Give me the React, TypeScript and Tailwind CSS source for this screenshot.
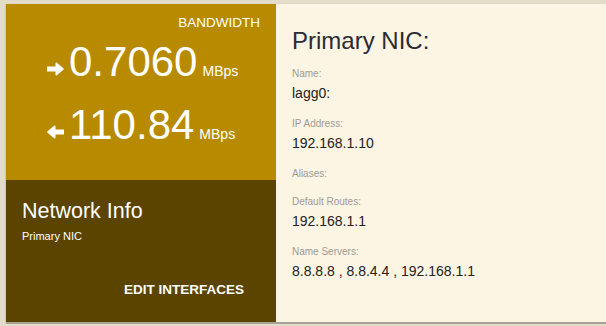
const fields = [
  { label: 'Name:', value: 'lagg0:' },
  { label: 'IP Address:', value: '192.168.1.10' },
  { label: 'Aliases:', value: '' },
  { label: 'Default Routes:', value: '192.168.1.1' },
  { label: 'Name Servers:', value: '8.8.8.8 , 8.8.4.4 , 192.168.1.1' },
];

function Arrow({ left }: { left?: boolean }) {
  return (
    <svg width="17" height="14" viewBox="0 0 17 14" className={left ? 'block -scale-x-100' : 'block'}>
      <path d="M0 4.5h8.5V1.2c0-.8.6-1 1.1-.6l6.8 5.6c.5.4.5 1.2 0 1.6l-6.8 5.6c-.5.4-1.1.2-1.1-.6V9.5H0z" fill="#fff" />
    </svg>
  );
}

function Rate({ value, left }: { value: string; left?: boolean }) {
  return (
    <div className="flex items-baseline pl-[41px]">
      <span className="mr-[5px] mb-[1px]">
        <Arrow left={left} />
      </span>
      <span className="text-[42px] leading-[40px] text-white">{value}</span>
      <span className="ml-[5px] text-[14px] leading-[16px] text-white">MBps</span>
    </div>
  );
}

export default function App() {
  return (
    <div className="min-h-[326px] w-[606px] overflow-hidden bg-[#e3dcc9] pt-[4px] pl-[6px] font-['Liberation_Sans',Arial,sans-serif]">
      <div className="flex h-[318px] w-[600px] shadow-[0_2px_0_#a8a396,-1px_0_1px_rgba(0,0,0,0.08)]">
        {/* left column */}
        <div className="flex w-[270px] flex-col">
          <div className="h-[176px] bg-[#b88a00] pt-[11px]">
            <div className="pr-[16px] text-right text-[13.5px] leading-[16px] text-white">BANDWIDTH</div>
            <div className="mt-[11px]">
              <Rate value="0.7060" />
            </div>
            <div className="mt-[23px]">
              <Rate value="110.84" left />
            </div>
          </div>
          <div className="flex flex-1 flex-col bg-[#5a4400] px-[16px] pt-[19px] pb-[24px]">
            <div className="text-[21.5px] leading-[24px] text-white">Network Info</div>
            <div className="mt-[6px] text-[11px] leading-[14px] text-white">Primary NIC</div>
            <div className="mt-auto flex justify-end pr-[16px]">
              <button className="text-[13.5px] leading-[16px] font-semibold text-white">EDIT INTERFACES</button>
            </div>
          </div>
        </div>

        {/* right column */}
        <div className="flex-1 bg-[#fdf5e3] pt-[23px] pl-[16px]">
          <div className="text-[24px] leading-[28px] text-[#2b2b33]">Primary NIC:</div>
          <div className="mt-[12px]">
            {fields.map((f) => (
              <div key={f.label} className="mb-[14px]">
                <div className="text-[10px] leading-[14px] text-[#9d9a94]">{f.label}</div>
                {f.value && (
                  <div className="mt-[2px] text-[14px] leading-[20px] text-[#222]">{f.value}</div>
                )}
              </div>
            ))}
          </div>
        </div>
      </div>
    </div>
  );
}
